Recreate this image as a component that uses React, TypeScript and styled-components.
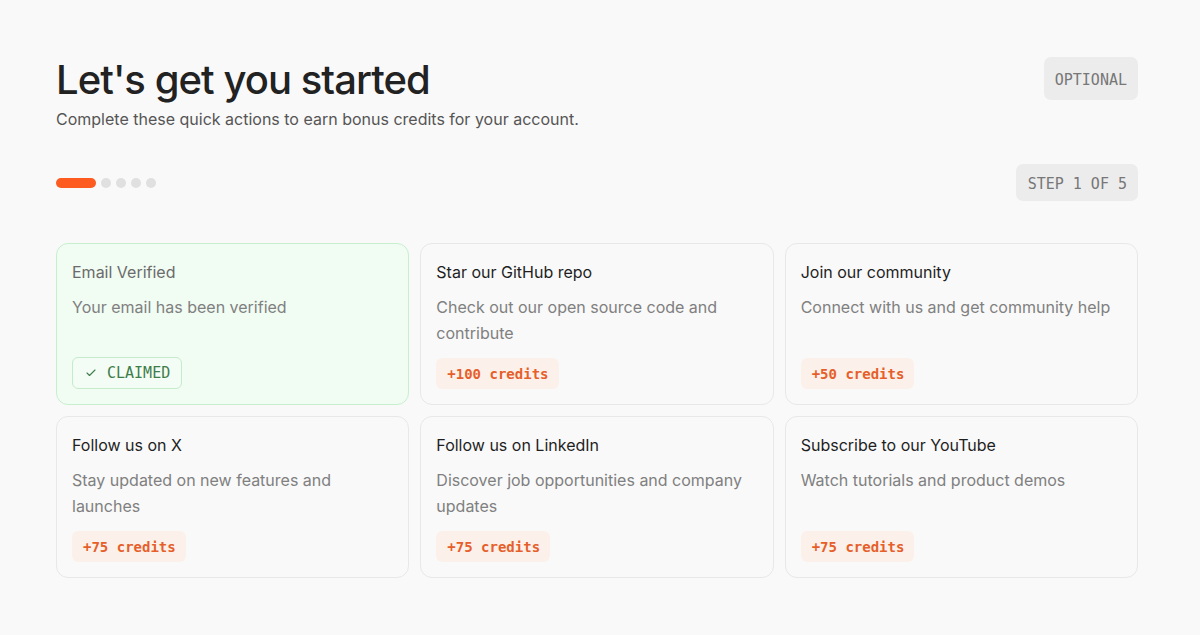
import styled, { createGlobalStyle } from 'styled-components'

const GlobalStyle = createGlobalStyle`
  * { box-sizing: border-box; }
  body {
    margin: 0;
    background: #f9f9f9;
    font-family: Inter, 'Noto Sans', sans-serif;
    color: #222;
  }
`

const Page = styled.div`
  padding: 56px 62px 40px 56px;
`

const Header = styled.div`
  display: flex;
  justify-content: space-between;
  align-items: flex-start;
`

const Title = styled.h1`
  margin: 0;
  font-size: 40px;
  line-height: 48px;
  font-weight: 500;
  letter-spacing: -0.95px;
  color: #222;
`

const Subtitle = styled.p`
  margin: 4px 0 0;
  font-size: 16px;
  line-height: 22px;
  color: #555;
`

const Tag = styled.span`
  display: inline-flex;
  align-items: center;
  padding: 0 11px;
  background: #ececec;
  border-radius: 7px;
  font-family: 'DejaVu Sans Mono', 'Liberation Mono', monospace;
  font-size: 15px;
  color: #777;
`

const OptionalTag = styled(Tag)`
  height: 43px;
  margin-top: 1px;
  padding-top: 3px;
`

const ProgressRow = styled.div`
  display: flex;
  justify-content: space-between;
  align-items: center;
  margin-top: 34px;
`

const Dots = styled.div`
  display: flex;
  gap: 5px;
  align-items: center;
`

const Dot = styled.span<{ $active?: boolean }>`
  height: 10px;
  width: ${p => (p.$active ? '40px' : '10px')};
  border-radius: 5px;
  background: ${p => (p.$active ? '#fd5b1f' : '#e0e0e0')};
`

const StepTag = styled(Tag)`
  height: 37px;
  padding: 2px 11px 0 12px;
`

const Grid = styled.div`
  display: grid;
  grid-template-columns: repeat(3, 1fr);
  gap: 11px;
  margin-top: 42px;
`

const Card = styled.div<{ $done?: boolean }>`
  display: flex;
  flex-direction: column;
  min-height: 162px;
  padding: 16px 15px 15px;
  border-radius: 12px;
  border: 1px solid ${p => (p.$done ? '#c6efcd' : '#e8e8e8')};
  background: ${p => (p.$done ? '#f1fcf3' : '#f9f9f9')};
`

const CardTitle = styled.div<{ $done?: boolean }>`
  font-size: 16px;
  line-height: 24px;
  color: ${p => (p.$done ? '#6b6b6b' : '#1f1f1f')};
`

const CardText = styled.div`
  margin-top: 10px;
  font-size: 16px;
  line-height: 26px;
  color: #808080;
`

const Footer = styled.div`
  margin-top: auto;
  padding-top: 12px;
  display: flex;
`

const Credits = styled.span`
  display: inline-flex;
  align-items: center;
  height: 31px;
  padding: 0 10px 0 11px;
  border-radius: 6px;
  background: #fcf1ea;
  color: #e65f2b;
  font-family: 'DejaVu Sans Mono', 'Liberation Mono', monospace;
  font-size: 14px;
  font-weight: 700;
`

const Claimed = styled.span`
  display: inline-flex;
  align-items: center;
  gap: 10px;
  height: 32px;
  padding: 0 11px 0 12px;
  border-radius: 6px;
  border: 1px solid #c6ebcc;
  background: #f3fcf5;
  color: #3f7d4a;
  font-family: 'DejaVu Sans Mono', 'Liberation Mono', monospace;
  font-size: 15px;
`

const CheckIcon = () => (
  <svg width="12" height="12" viewBox="0 0 24 24" fill="none" stroke="#3f7d4a" strokeWidth="2.2" strokeLinecap="round" strokeLinejoin="round">
    <path d="M20 6 9 17l-5-5" />
  </svg>
)

type Task = { title: string; text: string; credits?: number; done?: boolean }

const tasks: Task[] = [
  { title: 'Email Verified', text: 'Your email has been verified', done: true },
  { title: 'Star our GitHub repo', text: 'Check out our open source code and contribute', credits: 100 },
  { title: 'Join our community', text: 'Connect with us and get community help', credits: 50 },
  { title: 'Follow us on X', text: 'Stay updated on new features and launches', credits: 75 },
  { title: 'Follow us on LinkedIn', text: 'Discover job opportunities and company updates', credits: 75 },
  { title: 'Subscribe to our YouTube', text: 'Watch tutorials and product demos', credits: 75 },
]

const App = () => {
  return (
    <Page>
      <GlobalStyle />
      <Header>
        <div>
          <Title>Let's get you started</Title>
          <Subtitle>Complete these quick actions to earn bonus credits for your account.</Subtitle>
        </div>
        <OptionalTag>OPTIONAL</OptionalTag>
      </Header>
      <ProgressRow>
        <Dots>
          <Dot $active />
          <Dot />
          <Dot />
          <Dot />
          <Dot />
        </Dots>
        <StepTag>STEP 1 OF 5</StepTag>
      </ProgressRow>
      <Grid>
        {tasks.map(t => (
          <Card key={t.title} $done={t.done}>
            <CardTitle $done={t.done}>{t.title}</CardTitle>
            <CardText>{t.text}</CardText>
            <Footer>
              {t.done ? (
                <Claimed>
                  <CheckIcon />
                  CLAIMED
                </Claimed>
              ) : (
                <Credits>+{t.credits} credits</Credits>
              )}
            </Footer>
          </Card>
        ))}
      </Grid>
    </Page>
  )
}

export default App
